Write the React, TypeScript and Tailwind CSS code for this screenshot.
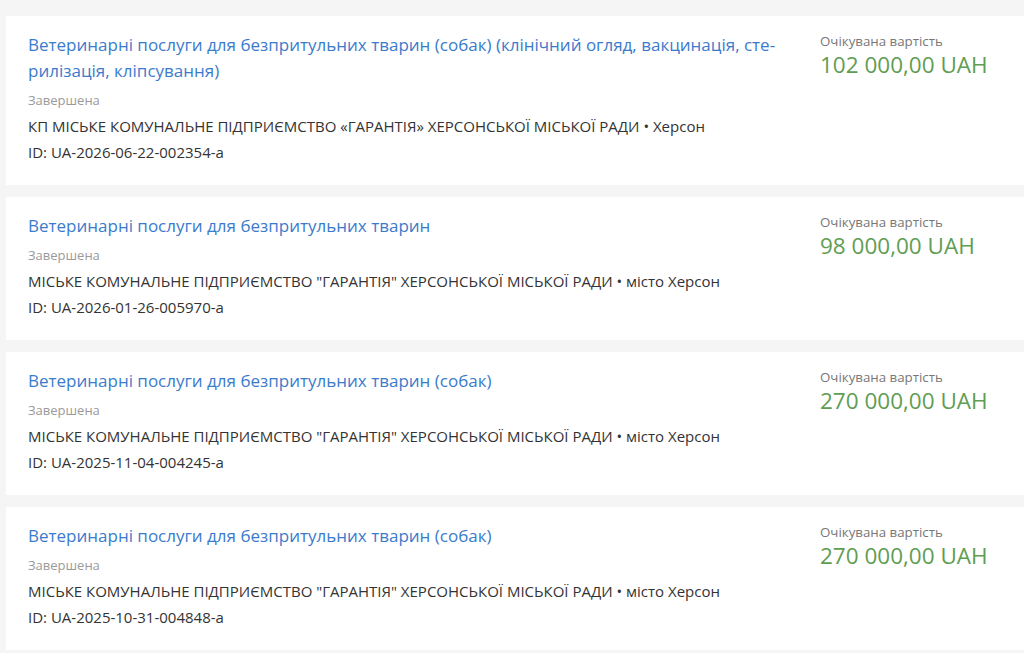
import React from "react";

type Tender = {
  title: React.ReactNode;
  status: string;
  org: string;
  id: string;
  amount: string;
};

const tenders: Tender[] = [
  {
    title: (
      <>
        Ветеринарні послуги для безпритульних тварин (собак) (клінічний огляд, вакцинація, сте-
        <br />
        рилізація, кліпсування)
      </>
    ),
    status: "Завершена",
    org: "КП МІСЬКЕ КОМУНАЛЬНЕ ПІДПРИЄМСТВО «ГАРАНТІЯ» ХЕРСОНСЬКОЇ МІСЬКОЇ РАДИ • Херсон",
    id: "ID: UA-2026-06-22-002354-a",
    amount: "102 000,00 UAH",
  },
  {
    title: "Ветеринарні послуги для безпритульних тварин",
    status: "Завершена",
    org: 'МІСЬКЕ КОМУНАЛЬНЕ ПІДПРИЄМСТВО "ГАРАНТІЯ" ХЕРСОНСЬКОЇ МІСЬКОЇ РАДИ • місто Херсон',
    id: "ID: UA-2026-01-26-005970-a",
    amount: "98 000,00 UAH",
  },
  {
    title: "Ветеринарні послуги для безпритульних тварин (собак)",
    status: "Завершена",
    org: 'МІСЬКЕ КОМУНАЛЬНЕ ПІДПРИЄМСТВО "ГАРАНТІЯ" ХЕРСОНСЬКОЇ МІСЬКОЇ РАДИ • місто Херсон',
    id: "ID: UA-2025-11-04-004245-a",
    amount: "270 000,00 UAH",
  },
  {
    title: "Ветеринарні послуги для безпритульних тварин (собак)",
    status: "Завершена",
    org: 'МІСЬКЕ КОМУНАЛЬНЕ ПІДПРИЄМСТВО "ГАРАНТІЯ" ХЕРСОНСЬКОЇ МІСЬКОЇ РАДИ • місто Херсон',
    id: "ID: UA-2025-10-31-004848-a",
    amount: "270 000,00 UAH",
  },
];

function TenderCard({ t }: { t: Tender }) {
  return (
    <div className="flex bg-white pl-[22px] pt-[16px] pb-[20px]">
      <div className="w-[770px] shrink-0">
        <a href="#" className="block text-[17px] leading-[26px] text-[#3b7bcc]">
          {t.title}
        </a>
        <div className="mt-[5px] text-[13px] leading-[22px] text-[#9a9a9a]">{t.status}</div>
        <div className="mt-[2px] text-[15px] leading-[26px] text-[#333333]">{t.org}</div>
        <div className="text-[15px] leading-[26px] text-[#333333]">{t.id}</div>
      </div>
      <div className="ml-[22px]">
        <div className="text-[13.3px] leading-[18px] text-[#777777]">Очікувана вартість</div>
        <div className="text-[22.5px] font-normal leading-[30px] text-[#5f9d53]">{t.amount}</div>
      </div>
    </div>
  );
}

export default function App() {
  return (
    <div
      className="min-h-[653px] w-full overflow-hidden bg-[#f5f5f5] pl-[6px] pt-[16px]"
      style={{ fontFamily: '"Open Sans", "Noto Sans", sans-serif' }}
    >
      <div className="flex w-[1040px] flex-col gap-[12px]">
        {tenders.map((t, i) => (
          <TenderCard key={i} t={t} />
        ))}
      </div>
    </div>
  );
}
